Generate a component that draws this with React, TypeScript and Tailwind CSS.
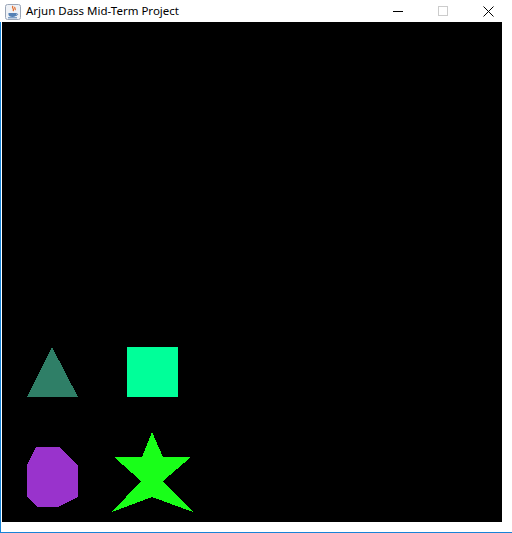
function JavaIcon() {
  return (
    <svg width="16" height="16" viewBox="0 0 16 16">
      <rect x="0.5" y="0.5" width="15" height="15" rx="2" fill="#eef1f6" stroke="#9aa6b8" />
      <path d="M8 2c-2 2 2 3 0 5M10 3c-1 1 1 2 0 3" stroke="#e2621c" strokeWidth="1.2" fill="none" />
      <path d="M3.5 9h8v1.5c0 1.5-1.5 2.5-4 2.5s-4-1-4-2.5z" fill="#5380b5" />
      <path d="M11.5 9.5c1.5 0 1.5 2-0.5 2" stroke="#5380b5" fill="none" />
      <rect x="3" y="13.3" width="9" height="1" fill="#5380b5" />
    </svg>
  );
}

function TitleBar() {
  return (
    <div className="flex h-[22px] items-center bg-white">
      <div className="ml-[5px] mt-[1px]">
        <JavaIcon />
      </div>
      <span className="ml-[5px] text-[11.5px] text-black" style={{ fontFamily: '"Noto Sans", "Liberation Sans", sans-serif' }}>
        Arjun Dass Mid-Term Project
      </span>
      <div className="ml-auto flex items-center">
        <div className="flex w-[46px] justify-center pl-[2px]">
          <div className="h-px w-[10px] bg-black" />
        </div>
        <div className="flex w-[46px] justify-center">
          <div className="h-[10px] w-[10px] border border-[#cccccc]" />
        </div>
        <div className="flex w-[46px] justify-center pr-[2px]">
          <svg width="11" height="11" viewBox="0 0 11 11">
            <path d="M0.5 0.5l10 10M10.5 0.5l-10 10" stroke="#000" strokeWidth="1" />
          </svg>
        </div>
      </div>
    </div>
  );
}

function Canvas() {
  return (
    <svg width="500" height="500" viewBox="0 0 500 500" shapeRendering="crispEdges" className="block bg-black">
      <polygon points="50,325 25,375 76,375" fill="#2f7f67" />
      <rect x="125" y="325" width="51" height="50" fill="#00ff99" />
      <polygon points="34,425 57,425 76,444 76,475 56,485 35,485 25,475 25,443" fill="#9933cc" />
      <polygon
        points="150,410 140,435 112,435 139,459 110,490 150,475 191,490 161,459 189,435 161,435"
        fill="#19ff19"
      />
    </svg>
  );
}

export default function App() {
  return (
    <div className="h-[533px] w-[512px] overflow-hidden bg-white">
      <TitleBar />
      <div className="flex">
        <div className="w-px bg-[#1883d7]" />
        <div className="w-px bg-white" />
        <Canvas />
      </div>
      <div className="flex h-[10px]">
        <div className="w-px bg-[#1883d7]" />
      </div>
      <div className="h-px bg-[#1883d7]" />
    </div>
  );
}
